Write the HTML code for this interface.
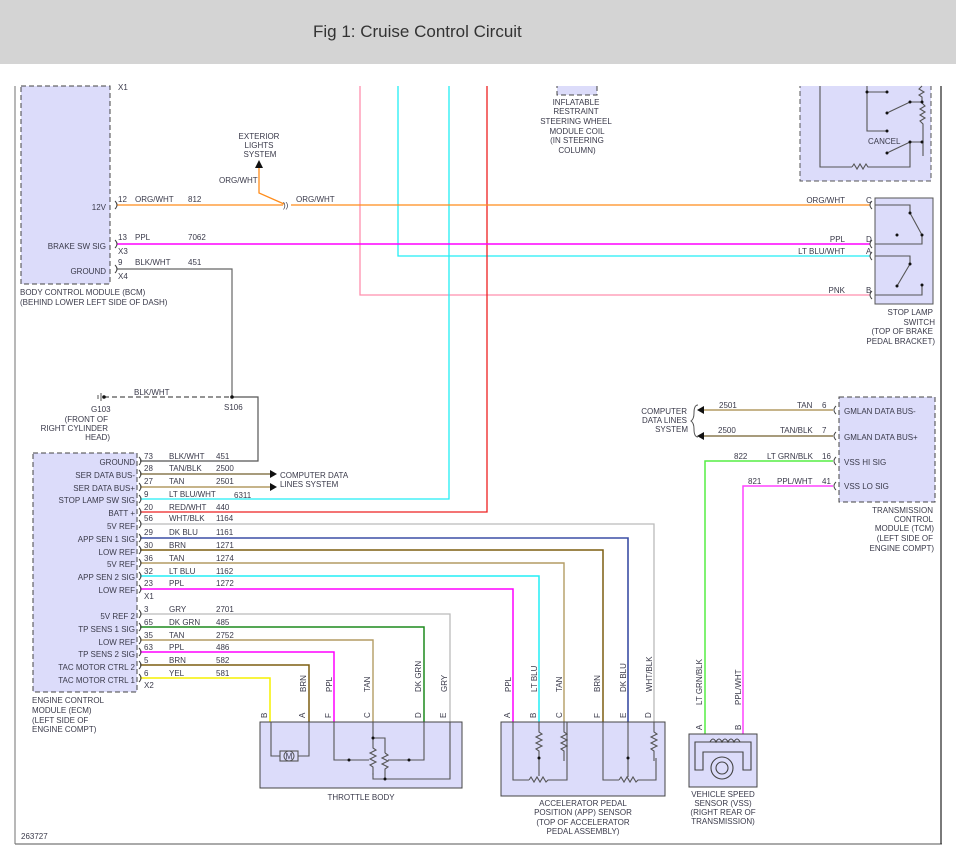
<!DOCTYPE html>
<html><head><meta charset="utf-8"><style>
html,body{margin:0;padding:0;background:#fff;width:956px;height:863px;overflow:hidden}
.hdr{position:absolute;left:0;top:0;width:956px;height:64px;background:#d4d4d4}
.hdr span{position:absolute;left:313px;top:22px;font:17px "Liberation Sans",sans-serif;color:#333}
svg{position:absolute;left:0;top:0}
text{font-family:"Liberation Sans",sans-serif;font-size:8px;fill:#3a3a4a}
.r{text-anchor:end}.m{text-anchor:middle}
</style></head><body>
<div class="hdr"><span>Fig 1: Cruise Control Circuit</span></div>
<svg width="956" height="863" viewBox="0 0 956 863">
<!-- frame -->
<line x1="15" y1="86" x2="15" y2="844" stroke="#888" stroke-width="1.2"/>
<line x1="15" y1="844" x2="942" y2="844" stroke="#777" stroke-width="1.2"/>
<line x1="941" y1="86" x2="941" y2="844" stroke="#222" stroke-width="1.2"/>

<!-- BCM -->
<rect x="21" y="86" width="89" height="198" fill="#dcdcfa" stroke="#444" stroke-dasharray="5,3"/>
<text x="118" y="90">X1</text>
<text class="r" x="106" y="210">12V</text>
<text class="r" x="106" y="249">BRAKE SW SIG</text>
<text class="r" x="106" y="274">GROUND</text>
<text x="20" y="295">BODY CONTROL MODULE (BCM)</text>
<text x="20" y="305">(BEHIND LOWER LEFT SIDE OF DASH)</text>
<text x="118" y="202">12</text><text x="135" y="202">ORG/WHT</text><text x="188" y="202">812</text>
<text x="118" y="240">13</text><text x="135" y="240">PPL</text><text x="188" y="240">7062</text>
<text x="118" y="254">X3</text>
<text x="118" y="265">9</text><text x="135" y="265">BLK/WHT</text><text x="188" y="265">451</text>
<text x="118" y="279">X4</text>

<!-- vertical wires from top -->
<polyline points="360,86 360,295 870,295" fill="none" stroke="#ff8fae" stroke-width="1.3"/>
<polyline points="398,86 398,256 870,256" fill="none" stroke="#22eef5" stroke-width="1.3"/>
<polyline points="449,86 449,499 140,499" fill="none" stroke="#22eef5" stroke-width="1.3"/>
<polyline points="487,86 487,512 140,512" fill="none" stroke="#ee2020" stroke-width="1.3"/>

<!-- ORG/WHT -->
<line x1="117" y1="205" x2="283" y2="205" stroke="#ff8c1a" stroke-width="1.3"/>
<line x1="291" y1="205" x2="870" y2="205" stroke="#ff8c1a" stroke-width="1.3"/>
<polyline points="284,204 259,193 259,168" fill="none" stroke="#ff8c1a" stroke-width="1.3"/>
<polygon points="255,168 263,168 259,160" fill="#111"/>
<text class="m" x="259" y="139">EXTERIOR</text><text class="m" x="259" y="148">LIGHTS</text><text class="m" x="260" y="157">SYSTEM</text>
<text x="219" y="183">ORG/WHT</text>
<text x="296" y="202">ORG/WHT</text>
<text x="283" y="208" font-size="9">))</text>
<!-- PPL -->
<line x1="117" y1="244" x2="870" y2="244" stroke="#ff00ff" stroke-width="1.5"/>
<!-- BLK/WHT to S106 -->
<polyline points="117,269 232,269 232,397" fill="none" stroke="#666" stroke-width="1.2"/>
<line x1="104" y1="397" x2="232" y2="397" stroke="#555" stroke-width="1.2" stroke-dasharray="5,3"/>
<polyline points="232,397 258,397 258,461 140,461" fill="none" stroke="#555" stroke-width="1.2"/>
<circle cx="232" cy="397" r="1.8" fill="#111"/><circle cx="104" cy="397" r="1.8" fill="#111"/>
<line x1="101" y1="393" x2="101" y2="401" stroke="#555"/><line x1="98" y1="395" x2="98" y2="399" stroke="#555"/>
<text x="134" y="395">BLK/WHT</text><text x="224" y="410">S106</text>
<text x="91" y="412">G103</text><text class="r" x="108" y="422">(FRONT OF</text><text class="r" x="108" y="431">RIGHT CYLINDER</text><text class="r" x="110" y="440">HEAD)</text>
<!-- BCM pin brackets -->
<path d="M115,201 q4,4 0,8 M115,240 q4,4 0,8 M115,265 q4,4 0,8" fill="none" stroke="#444"/>

<!-- ECM -->
<rect x="33" y="453" width="104" height="239" fill="#dcdcfa" stroke="#444" stroke-dasharray="5,3"/>
<g class="r">
<text class="r" x="135" y="465">GROUND</text>
<text class="r" x="135" y="478">SER DATA BUS-</text>
<text class="r" x="135" y="491">SER DATA BUS+</text>
<text class="r" x="135" y="503">STOP LAMP SW SIG</text>
<text class="r" x="135" y="516">BATT +</text>
<text class="r" x="135" y="529">5V REF</text>
<text class="r" x="135" y="542">APP SEN 1 SIG</text>
<text class="r" x="135" y="555">LOW REF</text>
<text class="r" x="135" y="567">5V REF</text>
<text class="r" x="135" y="580">APP SEN 2 SIG</text>
<text class="r" x="135" y="593">LOW REF</text>
<text class="r" x="135" y="619">5V REF 2</text>
<text class="r" x="135" y="632">TP SENS 1 SIG</text>
<text class="r" x="135" y="645">LOW REF</text>
<text class="r" x="135" y="657">TP SENS 2 SIG</text>
<text class="r" x="135" y="670">TAC MOTOR CTRL 2</text>
<text class="r" x="135" y="683">TAC MOTOR CTRL 1</text>
</g>
<text x="32" y="703">ENGINE CONTROL</text><text x="32" y="713">MODULE (ECM)</text><text x="32" y="723">(LEFT SIDE OF</text><text x="32" y="732">ENGINE COMPT)</text>

<!-- ECM wires -->
<polyline points="140,474 270,474" stroke="#8a7a50" stroke-width="1.4" fill="none"/>
<polyline points="140,487 270,487" stroke="#b49c64" stroke-width="1.4" fill="none"/>
<polygon points="270,470 277,474 270,478" fill="#111"/><polygon points="270,483 277,487 270,491" fill="#111"/>
<text x="280" y="478">COMPUTER DATA</text><text x="280" y="487">LINES SYSTEM</text>
<polyline points="140,524 654,524 654,722" stroke="#bbb" stroke-width="1.3" fill="none"/>
<polyline points="140,538 628,538 628,722" stroke="#3b4ea5" stroke-width="1.6" fill="none"/>
<polyline points="140,550 603,550 603,722" stroke="#7d5e10" stroke-width="1.5" fill="none"/>
<polyline points="140,563 564,563 564,722" stroke="#b49c64" stroke-width="1.4" fill="none"/>
<polyline points="140,576 539,576 539,722" stroke="#22eef5" stroke-width="1.5" fill="none"/>
<polyline points="140,589 513,589 513,722" stroke="#ff00ff" stroke-width="1.5" fill="none"/>
<polyline points="140,614 450,614 450,722" stroke="#bbb" stroke-width="1.3" fill="none"/>
<polyline points="140,627 424,627 424,722" stroke="#1d8a1d" stroke-width="1.5" fill="none"/>
<polyline points="140,640 373,640 373,722" stroke="#b49c64" stroke-width="1.4" fill="none"/>
<polyline points="140,652 334,652 334,722" stroke="#ff00ff" stroke-width="1.5" fill="none"/>
<polyline points="140,665 309,665 309,722" stroke="#7d5e10" stroke-width="1.5" fill="none"/>
<polyline points="140,678 270,678 270,722" stroke="#f5f000" stroke-width="1.5" fill="none"/>
<path d="M139,457 q4,4 0,8 M139,470 q4,4 0,8 M139,483 q4,4 0,8 M139,495 q4,4 0,8 M139,508 q4,4 0,8 M139,520 q4,4 0,8 M139,534 q4,4 0,8 M139,546 q4,4 0,8 M139,559 q4,4 0,8 M139,572 q4,4 0,8 M139,585 q4,4 0,8 M139,610 q4,4 0,8 M139,623 q4,4 0,8 M139,636 q4,4 0,8 M139,648 q4,4 0,8 M139,661 q4,4 0,8 M139,674 q4,4 0,8" fill="none" stroke="#444"/>
<g>
<text x="144" y="459">73</text><text x="169" y="459">BLK/WHT</text><text x="216" y="459">451</text>
<text x="144" y="471">28</text><text x="169" y="471">TAN/BLK</text><text x="216" y="471">2500</text>
<text x="144" y="484">27</text><text x="169" y="484">TAN</text><text x="216" y="484">2501</text>
<text x="144" y="497">9</text><text x="169" y="497">LT BLU/WHT</text><text x="234" y="498">6311</text>
<text x="144" y="510">20</text><text x="169" y="510">RED/WHT</text><text x="216" y="510">440</text>
<text x="144" y="521">56</text><text x="169" y="521">WHT/BLK</text><text x="216" y="521">1164</text>
<text x="144" y="535">29</text><text x="169" y="535">DK BLU</text><text x="216" y="535">1161</text>
<text x="144" y="548">30</text><text x="169" y="548">BRN</text><text x="216" y="548">1271</text>
<text x="144" y="561">36</text><text x="169" y="561">TAN</text><text x="216" y="561">1274</text>
<text x="144" y="574">32</text><text x="169" y="574">LT BLU</text><text x="216" y="574">1162</text>
<text x="144" y="586">23</text><text x="169" y="586">PPL</text><text x="216" y="586">1272</text>
<text x="144" y="599">X1</text>
<text x="144" y="612">3</text><text x="169" y="612">GRY</text><text x="216" y="612">2701</text>
<text x="144" y="625">65</text><text x="169" y="625">DK GRN</text><text x="216" y="625">485</text>
<text x="144" y="638">35</text><text x="169" y="638">TAN</text><text x="216" y="638">2752</text>
<text x="144" y="650">63</text><text x="169" y="650">PPL</text><text x="216" y="650">486</text>
<text x="144" y="663">5</text><text x="169" y="663">BRN</text><text x="216" y="663">582</text>
<text x="144" y="676">6</text><text x="169" y="676">YEL</text><text x="216" y="676">581</text>
<text x="144" y="688">X2</text>
</g>

<!-- Throttle body -->
<rect x="260" y="722" width="202" height="66" fill="#dcdcfa" stroke="#444"/>
<g stroke="#555" fill="none" stroke-width="1.1">
<polyline points="271,722 271,756 280,756"/><polyline points="298,756 309,756 309,722"/>
<rect x="280" y="751" width="18" height="10" fill="#dcdcfa"/>
<polyline points="334,722 334,760 369,760"/><polyline points="373,722 373,738 385,738 385,753"/>
<polyline points="424,722 424,760 388,760"/><polyline points="450,722 450,779 385,779 373,779 373,773"/>
<path d="M373,738 v10 l3,2 -6,3 6,3 -6,3 6,3 -6,3 3,2 v8"/><path d="M385,753 l3,2 -6,3 6,3 -6,3 6,3 -3,2 v10"/>
</g>
<circle cx="289" cy="756" r="5" fill="#dcdcfa" stroke="#555"/><text class="m" x="289" y="759" font-size="7">M</text>
<circle cx="349" cy="760" r="1.5" fill="#111"/><circle cx="409" cy="760" r="1.5" fill="#111"/><circle cx="373" cy="738" r="1.5" fill="#111"/><circle cx="385" cy="779" r="1.5" fill="#111"/>
<text class="m" x="361" y="800">THROTTLE BODY</text>
<g font-size="8">
<text transform="translate(267,718) rotate(-90)">B</text><text transform="translate(305,718) rotate(-90)">A</text><text transform="translate(331,718) rotate(-90)">F</text><text transform="translate(370,718) rotate(-90)">C</text><text transform="translate(421,718) rotate(-90)">D</text><text transform="translate(446,718) rotate(-90)">E</text>
<text transform="translate(306,692) rotate(-90)">BRN</text><text transform="translate(332,692) rotate(-90)">PPL</text><text transform="translate(370,692) rotate(-90)">TAN</text><text transform="translate(421,692) rotate(-90)">DK GRN</text><text transform="translate(447,692) rotate(-90)">GRY</text>
<text transform="translate(511,692) rotate(-90)">PPL</text><text transform="translate(537,692) rotate(-90)">LT BLU</text><text transform="translate(562,692) rotate(-90)">TAN</text><text transform="translate(600,692) rotate(-90)">BRN</text><text transform="translate(626,692) rotate(-90)">DK BLU</text><text transform="translate(652,692) rotate(-90)">WHT/BLK</text>
<text transform="translate(510,718) rotate(-90)">A</text><text transform="translate(536,718) rotate(-90)">B</text><text transform="translate(562,718) rotate(-90)">C</text><text transform="translate(600,718) rotate(-90)">F</text><text transform="translate(626,718) rotate(-90)">E</text><text transform="translate(651,718) rotate(-90)">D</text>
<text transform="translate(702,705) rotate(-90)">LT GRN/BLK</text><text transform="translate(741,705) rotate(-90)">PPL/WHT</text>
<text transform="translate(702,730) rotate(-90)">A</text><text transform="translate(741,730) rotate(-90)">B</text>
</g>

<!-- APP sensor -->
<rect x="501" y="722" width="164" height="74" fill="#dcdcfa" stroke="#444"/>
<g stroke="#555" fill="none" stroke-width="1.1">
<polyline points="513,722 513,780 529,780"/><path d="M529,780 l2,-3 3,5 3,-5 3,5 3,-5 3,5 2,-2 h19 V722"/>
<path d="M539,722 v10 l3,2 -6,3 6,3 -6,3 6,3 -6,3 3,2 v25"/>
<path d="M564,722 v10 l3,2 -6,3 6,3 -6,3 6,3 -6,3 3,2 v10"/>
<polyline points="603,722 603,780 619,780"/><path d="M619,780 l2,-3 3,5 3,-5 3,5 3,-5 3,5 2,-2 h18 V758"/>
<path d="M628,722 v55"/>
<path d="M654,722 v10 l3,2 -6,3 6,3 -6,3 6,3 -6,3 3,2 v10"/>
</g>
<circle cx="539" cy="758" r="1.5" fill="#111"/><circle cx="628" cy="758" r="1.5" fill="#111"/>
<text class="m" x="583" y="806">ACCELERATOR PEDAL</text><text class="m" x="583" y="815">POSITION (APP) SENSOR</text><text class="m" x="583" y="825">(TOP OF ACCELERATOR</text><text class="m" x="583" y="834">PEDAL ASSEMBLY)</text>

<!-- VSS -->
<polyline points="833,461 705,461 705,734" fill="none" stroke="#55ee44" stroke-width="1.5"/>
<polyline points="833,486 743,486 743,734" fill="none" stroke="#ff44ff" stroke-width="1.5"/>
<rect x="689" y="734" width="68" height="53" fill="#dcdcfa" stroke="#444"/>
<g stroke="#444" fill="none" stroke-width="1.1">
<path d="M695,770 v-28 h56 v28 h-8 v-18 h-40 v18 z"/>
<path d="M710,742 q3,-6 6,0 q3,-6 6,0 q3,-6 6,0 q3,-6 6,0 q3,-6 6,0"/>
<circle cx="722" cy="768" r="11"/><circle cx="722" cy="768" r="6"/>
</g>
<text class="m" x="723" y="797">VEHICLE SPEED</text><text class="m" x="723" y="806">SENSOR (VSS)</text><text class="m" x="723" y="815">(RIGHT REAR OF</text><text class="m" x="723" y="824">TRANSMISSION)</text>

<!-- TCM -->
<rect x="839" y="397" width="96" height="105" fill="#dcdcfa" stroke="#444" stroke-dasharray="5,3"/>
<text x="844" y="414">GMLAN DATA BUS-</text><text x="844" y="440">GMLAN DATA BUS+</text><text x="844" y="465">VSS HI SIG</text><text x="844" y="489">VSS LO SIG</text>
<line x1="704" y1="410" x2="833" y2="410" stroke="#b49c64" stroke-width="1.4"/>
<line x1="704" y1="436" x2="833" y2="436" stroke="#8a7a50" stroke-width="1.4"/>
<polygon points="704,406 697,410 704,414" fill="#111"/><polygon points="704,432 697,436 704,440" fill="#111"/>
<text x="719" y="408">2501</text><text x="797" y="408">TAN</text><text x="822" y="408">6</text>
<text x="718" y="433">2500</text><text x="780" y="433">TAN/BLK</text><text x="822" y="433">7</text>
<text x="734" y="459">822</text><text x="767" y="459">LT GRN/BLK</text><text x="822" y="459">16</text>
<text x="748" y="484">821</text><text x="777" y="484">PPL/WHT</text><text x="822" y="484">41</text>
<text class="r" x="687" y="414">COMPUTER</text><text class="r" x="687" y="423">DATA LINES</text><text class="r" x="688" y="432">SYSTEM</text>
<path d="M698,405 q-4,0 -4,8 q0,6 -3,8 q3,2 3,8 q0,8 4,8" fill="none" stroke="#555"/>
<path d="M836,406 q-4,4 0,8 M836,432 q-4,4 0,8 M836,457 q-4,4 0,8 M836,482 q-4,4 0,8" fill="none" stroke="#444"/>
<text class="r" x="933" y="513">TRANSMISSION</text><text class="r" x="933" y="522">CONTROL</text><text class="r" x="934" y="531">MODULE (TCM)</text><text class="r" x="933" y="541">(LEFT SIDE OF</text><text class="r" x="934" y="551">ENGINE COMPT)</text>

<!-- Stop lamp switch -->
<rect x="875" y="198" width="58" height="106" fill="#dcdcfa" stroke="#555"/>
<g stroke="#555" fill="none" stroke-width="1.1">
<polyline points="875,205 910,205 910,213"/><polyline points="910,213 922,235 922,244 875,244"/>
<polyline points="875,256 910,256 910,264"/><polyline points="910,264 897,286"/><polyline points="922,285 922,295 875,295"/>
</g>
<circle cx="910" cy="213" r="1.5" fill="#111"/><circle cx="922" cy="235" r="1.5" fill="#111"/><circle cx="897" cy="235" r="1.5" fill="#111"/>
<circle cx="910" cy="264" r="1.5" fill="#111"/><circle cx="897" cy="286" r="1.5" fill="#111"/><circle cx="922" cy="285" r="1.5" fill="#111"/>
<path d="M872,201 q-4,4 0,8 M872,240 q-4,4 0,8 M872,252 q-4,4 0,8 M872,291 q-4,4 0,8" fill="none" stroke="#444"/>
<text class="r" x="845" y="203">ORG/WHT</text><text x="866" y="203">C</text>
<text class="r" x="845" y="242">PPL</text><text x="866" y="242">D</text>
<text class="r" x="845" y="254">LT BLU/WHT</text><text x="866" y="254">A</text>
<text class="r" x="845" y="293">PNK</text><text x="866" y="293">B</text>
<text class="r" x="933" y="315">STOP LAMP</text><text class="r" x="935" y="325">SWITCH</text><text class="r" x="933" y="334">(TOP OF BRAKE</text><text class="r" x="935" y="344">PEDAL BRACKET)</text>

<!-- Cruise switch top right -->
<rect x="800" y="80" width="131" height="101" fill="#dcdcfa" stroke="#555" stroke-dasharray="5,3"/>
<rect x="798" y="64" width="140" height="22" fill="#fff"/>
<g stroke="#555" fill="none" stroke-width="1.1">
<polyline points="820,86 820,167 852,167"/><path d="M852,167 l2,-3 3,5 3,-5 3,5 3,-5 2,3 h42 V143"/>
<polyline points="867,86 867,92 887,92"/><polyline points="867,92 867,131 887,131"/>
<polyline points="887,113 910,102 922,102"/><polyline points="887,153 910,142 922,142"/>
<path d="M922,86 l-3,3 5,3 -5,3 3,2 v6 l3,3 -5,3 5,3 -5,3 5,3 -5,3 3,3 v12 v20"/>
</g>
<circle cx="867" cy="92" r="1.5" fill="#111"/><circle cx="887" cy="92" r="1.5" fill="#111"/><circle cx="887" cy="113" r="1.5" fill="#111"/><circle cx="910" cy="102" r="1.5" fill="#111"/><circle cx="922" cy="102" r="1.5" fill="#111"/><circle cx="887" cy="131" r="1.5" fill="#111"/><circle cx="910" cy="142" r="1.5" fill="#111"/><circle cx="922" cy="142" r="1.5" fill="#111"/><circle cx="887" cy="153" r="1.5" fill="#111"/>
<text x="868" y="144">CANCEL</text>

<!-- Inflatable restraint -->
<rect x="557" y="78" width="40" height="17" fill="#dcdcfa" stroke="#444" stroke-dasharray="5,3"/>
<rect x="550" y="64" width="60" height="22" fill="#fff"/>
<text class="m" x="576" y="105">INFLATABLE</text><text class="m" x="576" y="114">RESTRAINT</text><text class="m" x="576" y="124">STEERING WHEEL</text><text class="m" x="577" y="134">MODULE COIL</text><text class="m" x="577" y="143">(IN STEERING</text><text class="m" x="577" y="153">COLUMN)</text>

<text x="21" y="839" font-size="7.5">263727</text>
</svg>
</body></html>
